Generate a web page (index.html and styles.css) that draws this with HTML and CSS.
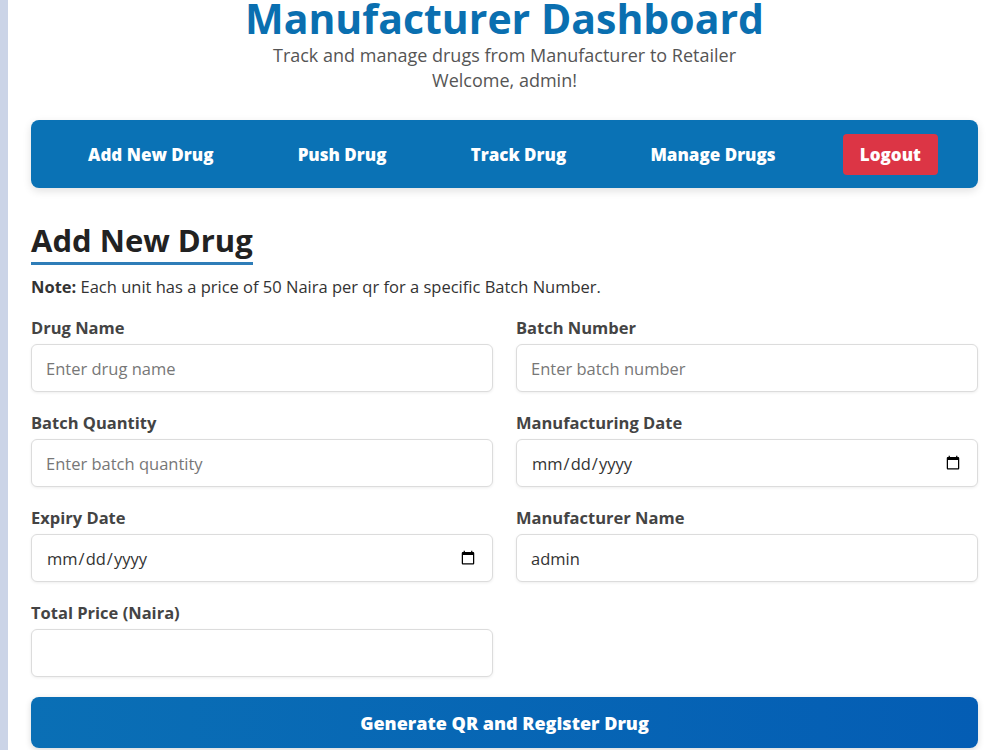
FILE: index.html
```html
<!DOCTYPE html>
<html lang="en">
<head>
    <meta charset="UTF-8">
    <title>Manufacturer Dashboard</title>
    <link rel="stylesheet" href="styles.css">
</head>
<body>
<div class="container">
    <header class="header">
        <h1>Manufacturer Dashboard</h1>
        <p>Track and manage drugs from Manufacturer to Retailer</p>
        <p>Welcome, admin!</p>
    </header>

    <nav class="nav">
        <a href="#">Add New Drug</a>
        <a href="#">Push Drug</a>
        <a href="#">Track Drug</a>
        <a href="#">Manage Drugs</a>
        <a href="#" class="logout">Logout</a>
    </nav>

    <section class="section">
        <h2>Add New Drug</h2>
        <p class="note"><strong>Note:</strong> Each unit has a price of 50 Naira per qr for a specific Batch Number.</p>

        <form class="form">
            <div class="field">
                <label for="drugName">Drug Name</label>
                <input type="text" id="drugName" placeholder="Enter drug name">
            </div>
            <div class="field">
                <label for="batchNumber">Batch Number</label>
                <input type="text" id="batchNumber" placeholder="Enter batch number">
            </div>
            <div class="field">
                <label for="batchQuantity">Batch Quantity</label>
                <input type="number" id="batchQuantity" placeholder="Enter batch quantity">
            </div>
            <div class="field">
                <label for="mfgDate">Manufacturing Date</label>
                <input type="date" id="mfgDate">
            </div>
            <div class="field">
                <label for="expDate">Expiry Date</label>
                <input type="date" id="expDate">
            </div>
            <div class="field">
                <label for="mfgName">Manufacturer Name</label>
                <input type="text" id="mfgName" value="admin">
            </div>
            <div class="field">
                <label for="totalPrice">Total Price (Naira)</label>
                <input type="text" id="totalPrice" readonly>
            </div>
            <button type="button" class="submit">Generate QR and Register Drug</button>
        </form>
    </section>
</div>
</body>
</html>
```

FILE: styles.css
```css
* {
    box-sizing: border-box;
}

body {
    margin: 0;
    padding-left: 8px;
    background: #cbd4e7;
    font-family: "Open Sans", "Noto Sans", sans-serif;
    color: #333;
    overflow: hidden;
}

.container {
    background: #fff;
    min-height: 750px;
    padding: 0 22px 0 23px;
}

.header {
    text-align: center;
}

.header h1 {
    margin: 0;
    font-size: 41px;
    line-height: 36px;
    color: #0a6fb0;
    font-weight: 700;
}

.header p {
    margin: 0;
    font-size: 18px;
    line-height: 25px;
    color: #555;
}

.header p:first-of-type {
    margin-top: 7px;
}

.nav {
    display: flex;
    justify-content: space-around;
    align-items: center;
    margin-top: 27px;
    padding: 14px 15px 13px;
    background: #0a72b5;
    border-radius: 8px;
    box-shadow: 0 3px 8px rgba(0, 0, 0, 0.12);
}

.nav a {
    color: #fff;
    text-decoration: none;
    font-weight: 800;
    font-size: 17px;
    line-height: 21px;
    padding: 10px 17px;
    border-radius: 4px;
}

.nav .logout {
    background: #dc3545;
}

.section h2 {
    display: inline-block;
    margin: 34px 0 0;
    padding-bottom: 4px;
    font-size: 31px;
    line-height: 36px;
    color: #222;
    border-bottom: 3px solid #2e7db8;
}

.note {
    margin: 11px 0 0;
    font-size: 16.5px;
    line-height: 22px;
    color: #333;
}

.form {
    display: grid;
    grid-template-columns: 1fr 1fr;
    column-gap: 23px;
    row-gap: 20px;
    margin-top: 19px;
}

.field label {
    display: block;
    font-size: 16.5px;
    font-weight: 700;
    line-height: 22px;
    color: #444;
    margin-bottom: 5px;
}

.field input {
    display: block;
    width: 100%;
    height: 48px;
    padding: 0 14px;
    border: 1px solid #dcdcdc;
    border-radius: 6px;
    background: #fff;
    font-family: inherit;
    font-size: 16.5px;
    color: #333;
    box-shadow: 0 1px 3px rgba(0, 0, 0, 0.07);
}

.field input::placeholder {
    color: #777;
}

.submit {
    grid-column: 1 / -1;
    height: 51px;
    border: none;
    border-radius: 8px;
    background: linear-gradient(90deg, #0a6fb5, #045db4);
    color: #fff;
    font-family: inherit;
    font-size: 18px;
    font-weight: 800;
    box-shadow: 0 2px 6px rgba(0, 0, 0, 0.15);
}
```
